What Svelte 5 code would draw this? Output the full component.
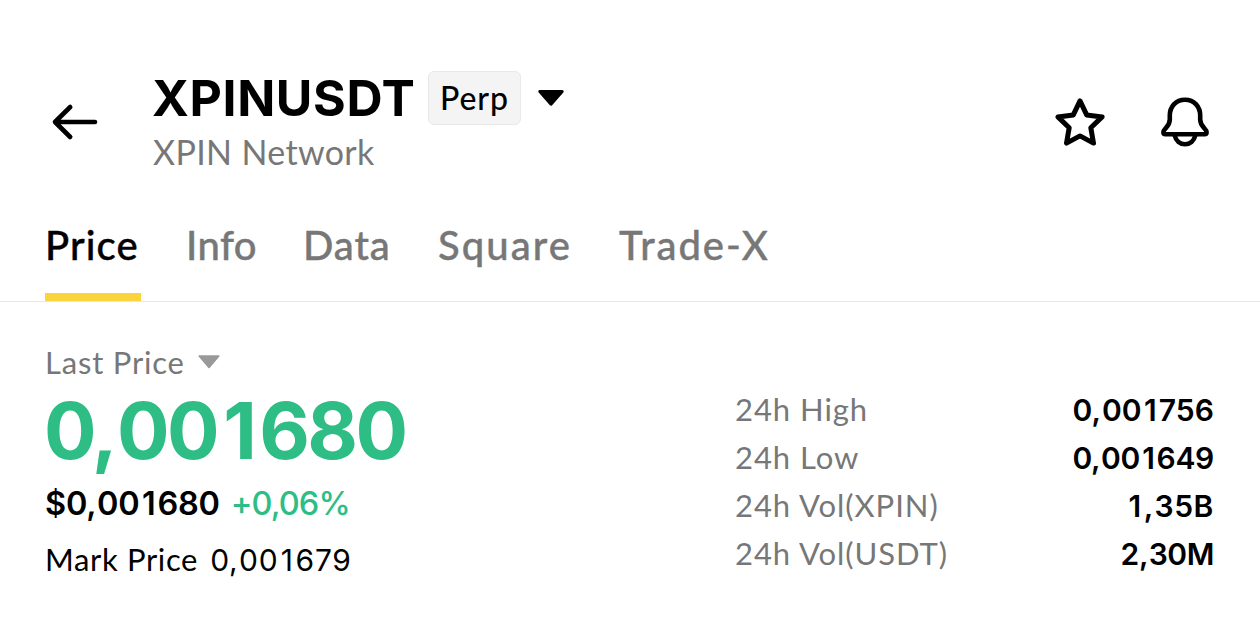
<script>
  const tabs = [
    { label: 'Price', width: 96, tracking: 1.1, active: true },
    { label: 'Info', width: 72, tracking: 0.4 },
    { label: 'Data', width: 90, tracking: 0.9 },
    { label: 'Square', width: 136, tracking: 2.1 },
    { label: 'Trade-X', width: 152, tracking: 1.9 },
  ];
  const stats = [
    { label: '24h High', value: '0,001756', tracking: 0.1 },
    { label: '24h Low', value: '0,001649', tracking: -0.3 },
    { label: '24h Vol(XPIN)', value: '1,35B', tracking: 0.6 },
    { label: '24h Vol(USDT)', value: '2,30M', tracking: -0.4 },
  ];
</script>

<!-- the narrow "1" and "," are padded so that digits keep an even pitch -->
{#snippet figure(value)}{#each value.split(/([1,])/) as part}{#if part === '1'}<span class="one">1</span>{:else if part === ','}<span class="comma">,</span>{:else}{part}{/if}{/each}{/snippet}

<main>
  <header>
    <svg class="back" width="48" height="40" viewBox="0 0 48 40" fill="none" stroke="#000" stroke-width="4.6" stroke-linecap="round" stroke-linejoin="round">
      <path d="M44 20H4M19.2 5L4 20l15.2 15" />
    </svg>
    <div class="identity">
      <div class="title">
        <h1>XPINUSDT</h1>
        <span class="chip">Perp</span>
        <svg class="caret" width="28" height="20" viewBox="0 0 28 20">
          <path d="M2.8 3.5H25.2L14 16.2Z" stroke="#000" stroke-width="3" stroke-linejoin="round" />
        </svg>
      </div>
      <div class="network">XPIN Network</div>
    </div>
    <div class="actions">
      <svg width="52" height="52" viewBox="0 0 52 52" fill="none" stroke="#000" stroke-width="5" stroke-linejoin="round">
        <path d="M26 4.9L32.7 18.9L48.1 20.9L36.8 31.8L39.5 47.1L26 39.9L12.5 47.1L15.2 31.8L3.9 20.9L19.3 18.9Z" />
      </svg>
      <svg width="52" height="52" viewBox="0 0 52 52" fill="none" stroke="#000" stroke-width="4.6" stroke-linejoin="round">
        <path d="M26 3.7C16.6 3.7 10.8 10.9 10.8 19.6V23.5C10.8 31 4.4 32.5 4.4 36.3C4.4 37.6 5.2 38.3 6.4 38.3H45.6C46.8 38.3 47.6 37.6 47.6 36.3C47.6 32.5 41.2 31 41.2 23.5V19.6C41.2 10.9 35.4 3.7 26 3.7Z" />
        <path d="M15.7 39.5C17 44.9 21 48.2 26 48.2S35 44.9 36.3 39.5" />
      </svg>
    </div>
  </header>

  <nav>
    {#each tabs as tab}
      <a class:active={tab.active} style="width:{tab.width}px;letter-spacing:{tab.tracking}px">{tab.label}</a>
    {/each}
  </nav>

  <section>
    <div class="quote">
      <div class="kind">
        Last Price
        <svg width="24" height="16" viewBox="0 0 24 16"><path d="M2.2 2H21.8L12 13.4Z" fill="#999" stroke="#999" stroke-width="1.6" stroke-linejoin="round" /></svg>
      </div>
      <div class="last num">{@render figure('0,001680')}</div>
      <div class="fiat num"><span>{@render figure('$0,001680')}</span><span class="change">+0,06%</span></div>
      <div class="mark"><span>Mark Price</span><span class="num">{@render figure('0,001679')}</span></div>
    </div>
    <dl>
      {#each stats as stat}
        <div class="stat">
          <dt>{stat.label}</dt>
          <dd class="num" style="letter-spacing:{stat.tracking}px">{@render figure(stat.value)}</dd>
        </div>
      {/each}
    </dl>
  </section>
</main>

<style>
  :global(body) { background: #fff; }
  main {
    width: 1260px;
    height: 620px;
    overflow: hidden;
    box-sizing: border-box;
    background: #fff;
    color: #000;
    font-family: Lato, "Open Sans", sans-serif;
    white-space: nowrap;
  }
  header {
    display: flex;
    height: 187px;
    box-sizing: border-box;
    padding: 71px 49px 0 51px;
  }
  svg { display: block; flex: none; }
  .back { margin: 31px 54px 0 0; }
  .title { display: flex; align-items: center; height: 54px; }
  h1 {
    margin: 0 0 0 -1px;
    width: 276px;
    font-family: Inter, sans-serif;
    font-size: 50px;
    line-height: 54px;
    font-weight: 680;
    letter-spacing: 0.6px;
  }
  .chip {
    box-sizing: border-box;
    width: 93px;
    height: 54px;
    border: 1px solid #e9e9e9;
    border-radius: 6px;
    background: #f4f4f4;
    font-size: 32px;
    line-height: 52px;
    font-weight: 500;
    letter-spacing: 0.9px;
    text-align: center;
  }
  .caret { margin-left: 16px; }
  .network {
    color: #777;
    font-size: 34px;
    line-height: 54px;
    letter-spacing: 0.35px;
  }
  .actions { display: flex; gap: 53px; margin: 25px 0 0 auto; }
  nav {
    display: flex;
    gap: 45px;
    box-sizing: border-box;
    height: 115px;
    padding-left: 45px;
    border-bottom: 1px solid #e8e8e8;
  }
  nav a {
    box-sizing: border-box;
    height: 114px;
    color: #777;
    font-size: 40px;
    line-height: 116px;
    font-weight: 500;
    -webkit-text-stroke: 0.4px;
  }
  nav .active { color: #000; box-shadow: inset 0 -8px #fbd33c; }
  section {
    display: flex;
    justify-content: space-between;
    padding: 36px 46px 0 45px;
  }
  .num { font-family: Inter, sans-serif; }
  .one { padding: 0 0.06em 0 0.08em; }
  .comma { padding-right: 0.02em; }
  .kind {
    display: flex;
    align-items: center;
    gap: 12px;
    color: #777;
    font-size: 31px;
    line-height: 47px;
    height: 48px;
    letter-spacing: 0.8px;
  }
  .last {
    margin-left: -1px;
    color: #2dbd85;
    font-size: 78px;
    line-height: 90px;
    height: 89px;
    font-weight: 700;
    letter-spacing: -2.5px;
  }
  .fiat { display: flex; gap: 11px; font-size: 32.5px; line-height: 57px; height: 56px; font-weight: 600; letter-spacing: -0.25px; }
  .change { color: #2dbd85; font-weight: 500; letter-spacing: -0.9px; }
  .mark { display: flex; gap: 12px; font-size: 31px; line-height: 57px; letter-spacing: 0.65px; }
  .mark .num { font-size: 30px; line-height: 58px; letter-spacing: 0.75px; }
  dl { width: 479px; margin: 47px 0 0; font-size: 31px; }
  .stat { display: flex; justify-content: space-between; line-height: 49px; height: 48px; }
  dt { color: #777; letter-spacing: 0.95px; }
  dd { margin: 0; font-size: 30px; line-height: 51px; font-weight: 600; }
</style>
